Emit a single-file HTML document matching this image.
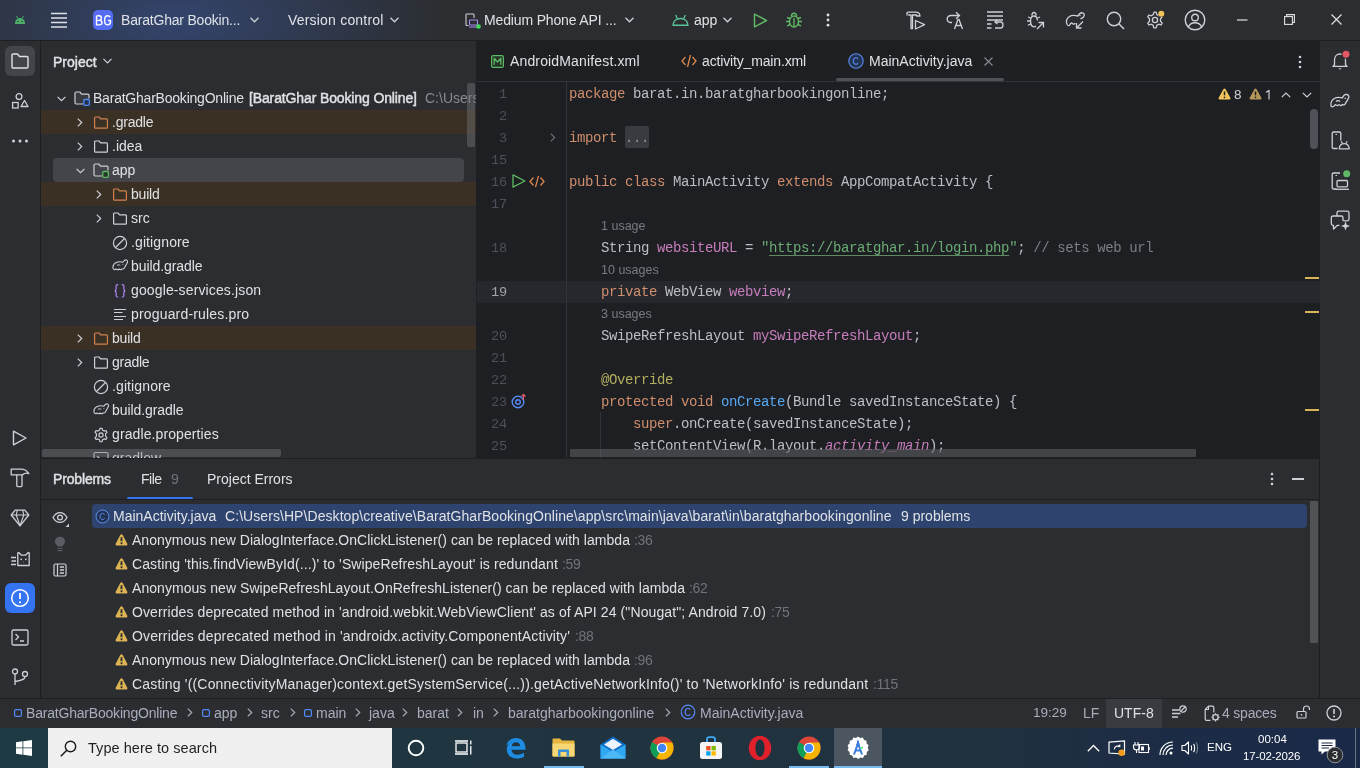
<!DOCTYPE html>
<html><head><meta charset="utf-8">
<style>
*{box-sizing:border-box;margin:0;padding:0}
body{will-change:transform}
html,body{width:1360px;height:768px;overflow:hidden;background:#1E1F22;font-family:"Liberation Sans",sans-serif;color:#DFE1E5}
.a{position:absolute}
.t{position:absolute;white-space:pre;font-size:14px;line-height:16px}
.ln{font-size:13.6px!important;letter-spacing:-0.2px!important}
.m{position:absolute;white-space:pre;font-family:"Liberation Mono",monospace;font-size:14px;letter-spacing:-0.4px;line-height:16px;color:#BCBEC4}
svg{position:absolute;overflow:visible}
#title{left:0;top:0;width:1360px;height:40px;background:#2B2D30}
#tline{left:0;top:40px;width:1360px;height:1px;background:#1E1F22}
#grad{left:0;top:0;width:1360px;height:40px;background:radial-gradient(ellipse 270px 110px at 175px 20px,rgba(58,88,160,0.55),rgba(58,88,160,0.25) 55%,rgba(58,88,160,0) 100%)}
#lstrip{left:0;top:41px;width:41px;height:657px;background:#2B2D30;border-right:1px solid #1E1F22}
#proj{left:41px;top:41px;width:435px;height:417px;background:#2B2D30}
#editor{left:476px;top:41px;width:844px;height:417px;background:#1E1F22}
#rstrip{left:1320px;top:41px;width:40px;height:657px;background:#2B2D30}
#probs{left:41px;top:459px;width:1278px;height:239px;background:#2B2D30}
#status{left:0;top:698px;width:1360px;height:30px;background:#2B2D30;border-top:1px solid #1E1F22}
#task{left:0;top:728px;width:1360px;height:40px;background:linear-gradient(90deg,#1E3A43 0%,#1F3641 25%,#20333F 55%,#20313F 72%,#1D2C45 85%,#1A2948 100%)}
</style></head><body>
<!-- TITLE BAR -->
<div id="title" class="a"></div>
<div id="grad" class="a"></div>
<div id="tline" class="a"></div>
<svg style="left:14px;top:15px" width="12" height="10" viewBox="0 0 12 10"><path d="M1 9 C1 5 3.5 3 6 3 C8.5 3 11 5 11 9 Z" fill="#4CAF6A"/><path d="M2.5 1 L4 3.5 M9.5 1 L8 3.5" stroke="#4CAF6A" stroke-width="1"/><circle cx="4" cy="6.5" r="0.7" fill="#2B2D30"/><circle cx="8" cy="6.5" r="0.7" fill="#2B2D30"/></svg>
<svg style="left:51px;top:12px" width="16" height="16" viewBox="0 0 16 16"><path d="M0 1.5H16M0 6H16M0 10.5H16M0 15H16" stroke="#DFE1E5" stroke-width="1.6"/></svg>
<div class="a" style="left:93px;top:10px;width:20px;height:20px;border-radius:5px;background:linear-gradient(135deg,#5A6CF2,#4F6CF5)"></div>
<svg style="left:95px;top:15px" width="17" height="11" viewBox="0 0 17 11"><path d="M1.5 0.8V9.9H4.6C6.1 9.9 7 9 7 7.6C7 6.2 6.1 5.3 4.6 5.3H1.5M1.5 5.3H4.2C5.6 5.3 6.4 4.5 6.4 3.1C6.4 1.7 5.6 0.8 4.2 0.8H1.5" stroke="#FFFFFF" stroke-width="1.35" fill="none" stroke-linejoin="round"/><path d="M15.2 2.3C14.7 1.3 13.9 0.7 12.7 0.7C10.8 0.7 9.6 2.3 9.6 5.3C9.6 8.3 10.8 9.9 12.7 9.9C14.4 9.9 15.5 8.8 15.5 6.8V5.5H12.9" stroke="#FFFFFF" stroke-width="1.35" fill="none" stroke-linejoin="round"/></svg>
<div class="t" style="left:121px;top:12px;color:#DFE1E5;letter-spacing:-0.2px">BaratGhar Bookin...</div>
<svg style="left:250px;top:17px" width="9" height="6" viewBox="0 0 9 6"><path d="M0.5 0.8L4.5 4.8L8.5 0.8" stroke="#CED0D6" stroke-width="1.3" fill="none"/></svg>
<div class="t" style="left:288px;top:12px;color:#DFE1E5;letter-spacing:0.2px">Version control</div>
<svg style="left:390px;top:17px" width="9" height="6" viewBox="0 0 9 6"><path d="M0.5 0.8L4.5 4.8L8.5 0.8" stroke="#CED0D6" stroke-width="1.3" fill="none"/></svg>
<svg style="left:465px;top:13px" width="16" height="16" viewBox="0 0 16 16"><path d="M3.5 12.5H1.8C1.3 12.5 1 12.2 1 11.7V1.8C1 1.3 1.3 1 1.8 1H8.2C8.7 1 9 1.3 9 1.8V5" stroke="#CED0D6" stroke-width="1.1" fill="none"/><rect x="4.5" y="7" width="8" height="5" rx="0.8" stroke="#A78BEB" stroke-width="1.1" fill="none"/><path d="M4 14H13" stroke="#A78BEB" stroke-width="1.1"/><circle cx="13.5" cy="13.5" r="2.3" fill="#3DDC5A"/></svg>
<div class="t" style="left:484px;top:12px;color:#DFE1E5;letter-spacing:-0.15px">Medium Phone API ...</div>
<svg style="left:625px;top:17px" width="9" height="6" viewBox="0 0 9 6"><path d="M0.5 0.8L4.5 4.8L8.5 0.8" stroke="#CED0D6" stroke-width="1.3" fill="none"/></svg>
<svg style="left:672px;top:14px" width="17" height="12" viewBox="0 0 17 12"><path d="M1 11.2C1.3 7 4.5 4.5 8.5 4.5C12.5 4.5 15.7 7 16 11.2Z" stroke="#5BC49A" stroke-width="1.4" fill="none" stroke-linejoin="round"/><path d="M3.5 1L5.3 4.4M13.5 1L11.7 4.4" stroke="#5BC49A" stroke-width="1.3"/></svg>
<div class="t" style="left:694px;top:12px;color:#DFE1E5">app</div>
<svg style="left:723px;top:17px" width="9" height="6" viewBox="0 0 9 6"><path d="M0.5 0.8L4.5 4.8L8.5 0.8" stroke="#CED0D6" stroke-width="1.3" fill="none"/></svg>
<svg style="left:753px;top:13px" width="15" height="15" viewBox="0 0 15 15"><path d="M1.5 1.2L13.5 7.5L1.5 13.8Z" stroke="#5FB865" stroke-width="1.5" fill="none" stroke-linejoin="round"/></svg>
<svg style="left:785px;top:12px" width="18" height="16" viewBox="0 0 18 16"><ellipse cx="9" cy="9.5" rx="4.5" ry="5.5" stroke="#5FB865" stroke-width="1.4" fill="none"/><path d="M6.3 4.2C6.5 2.2 7.5 1.2 9 1.2S11.5 2.2 11.7 4.2M4.5 9.5H1M17 9.5H13.5M5 6.5L2 5.5M13 6.5L16 5.5M5 12.5L2 13.8M13 12.5L16 13.8M9 6V15" stroke="#5FB865" stroke-width="1.4" fill="none"/></svg>
<svg style="left:826px;top:13px" width="4" height="14" viewBox="0 0 4 14"><circle cx="2" cy="2" r="1.4" fill="#DFE1E5"/><circle cx="2" cy="7" r="1.4" fill="#DFE1E5"/><circle cx="2" cy="12.2" r="1.4" fill="#DFE1E5"/></svg>
<!-- right title icons -->
<svg style="left:906px;top:11px" width="20" height="19" viewBox="0 0 20 19"><path d="M1 4.5V2.5C1 1.7 1.5 1.2 2.3 1.2H9.5C12 1.2 13.8 2.5 14 5H10.5V4H6.5V17.5H5V4H2.2" stroke="#CED0D6" stroke-width="1.3" fill="none" stroke-linejoin="round"/><path d="M9.5 9.5L18.5 13.7L9.5 18Z" stroke="#CED0D6" stroke-width="1.3" fill="none" stroke-linejoin="round"/></svg>
<svg style="left:946px;top:11px" width="19" height="19" viewBox="0 0 19 19"><path d="M13 4.5H5C2.8 4.5 1.2 6 1.2 8S2.8 11.5 5 11.5H6" stroke="#CED0D6" stroke-width="1.3" fill="none"/><path d="M10 1.2L13.5 4.5L10 7.8" stroke="#CED0D6" stroke-width="1.3" fill="none"/><path d="M8.5 18L12 8.5H13L16.5 18M9.8 14.5H15.2" stroke="#CED0D6" stroke-width="1.3" fill="none"/></svg>
<svg style="left:987px;top:11px" width="17" height="18" viewBox="0 0 17 18"><path d="M0 1H16M0 5H16M0 9H16M0 13H4.5M0 17H4.5" stroke="#CED0D6" stroke-width="1.3"/><path d="M9.5 11H13.5C15 11 16 12 16 14S15 17 13.5 17H8M10.5 9L8 11L10.5 13" stroke="#CED0D6" stroke-width="1.3" fill="none"/></svg>
<svg style="left:1026px;top:11px" width="19" height="19" viewBox="0 0 19 19"><path d="M11.5 9.5C11.2 6.5 9.8 5 8 5S4.5 6.8 4.5 10S5.8 15.8 8 15.8C8.8 15.8 9.5 15.5 10 15" stroke="#CED0D6" stroke-width="1.3" fill="none"/><path d="M5.8 4.5C6 2.5 6.8 1.5 8 1.5S10 2.5 10.2 4.5M4.5 10H1M4.8 7L2 6M4.8 13L2 14.2M11.5 7L14 6" stroke="#CED0D6" stroke-width="1.3" fill="none"/><path d="M11 18L17.5 11.5M12.5 11.5H17.5V16.5" stroke="#CED0D6" stroke-width="1.3" fill="none"/></svg>
<svg style="left:1065px;top:11px" width="21" height="19" viewBox="0 0 21 19"><path d="M2 13.5C1 11 1.5 7.5 4.5 5.5C7 3.8 11 4.5 13 5C14 3 15.5 1.5 17.5 1.8C19.5 2.2 19.8 4.5 18.5 6C17.5 7 16 7.5 15.5 8" stroke="#CED0D6" stroke-width="1.3" fill="none"/><path d="M2 13.5C3 15 4.5 15 5 13.5C5.5 12 6.5 11.5 7.5 12.5C8.5 13.5 9.5 13.5 10 12" stroke="#CED0D6" stroke-width="1.3" fill="none"/><path d="M18 10.5L11.5 17M11.5 12V17H16.5" stroke="#CED0D6" stroke-width="1.3" fill="none"/><circle cx="15" cy="4.5" r="0.7" fill="#CED0D6"/></svg>
<svg style="left:1106px;top:11px" width="19" height="19" viewBox="0 0 19 19"><circle cx="8" cy="8" r="6.7" stroke="#CED0D6" stroke-width="1.4" fill="none"/><path d="M12.8 12.8L18 18" stroke="#CED0D6" stroke-width="1.5"/></svg>
<svg style="left:1145px;top:10px" width="21" height="20" viewBox="0 0 21 20"><path d="M9 2.2H11.2L11.8 4.6L13.8 5.8L16.1 5L17.2 6.9L15.5 8.7V11.3L17.2 13.1L16.1 15L13.8 14.2L11.8 15.4L11.2 17.8H8.8L8.2 15.4L6.2 14.2L3.9 15L2.8 13.1L4.5 11.3V8.7L2.8 6.9L3.9 5L6.2 5.8L8.2 4.6Z" stroke="#CED0D6" stroke-width="1.3" fill="none" stroke-linejoin="round"/><circle cx="10" cy="10" r="2.6" stroke="#CED0D6" stroke-width="1.3" fill="none"/><circle cx="16.5" cy="3.5" r="3.6" fill="#2B2D30"/><circle cx="16.3" cy="3.7" r="3" fill="#F2C55C"/></svg>
<svg style="left:1184px;top:9px" width="22" height="22" viewBox="0 0 22 22"><circle cx="11" cy="11" r="9.8" stroke="#CED0D6" stroke-width="1.4" fill="none"/><circle cx="11" cy="8.5" r="3.3" stroke="#CED0D6" stroke-width="1.4" fill="none"/><path d="M4.5 18C5.5 15 8 13.8 11 13.8S16.5 15 17.5 18" stroke="#CED0D6" stroke-width="1.4" fill="none"/></svg>
<svg style="left:1237px;top:19px" width="11" height="2" viewBox="0 0 11 2"><path d="M0 1H10.5" stroke="#DFE1E5" stroke-width="1.2"/></svg>
<svg style="left:1284px;top:14px" width="11" height="11" viewBox="0 0 11 11"><rect x="0.6" y="2.6" width="7.8" height="7.8" stroke="#DFE1E5" stroke-width="1.1" fill="none"/><path d="M2.6 2.6V0.6H10.4V8.4H8.4" stroke="#DFE1E5" stroke-width="1.1" fill="none"/></svg>
<svg style="left:1331px;top:14px" width="11" height="11" viewBox="0 0 11 11"><path d="M0.5 0.5L10.5 10.5M10.5 0.5L0.5 10.5" stroke="#DFE1E5" stroke-width="1.2"/></svg>
<!-- LEFT STRIP -->
<div id="lstrip" class="a"></div>
<div class="a" style="left:5px;top:46px;width:30px;height:30px;border-radius:6px;background:#43454A"></div>
<svg style="left:11px;top:53px" width="18" height="16" viewBox="0 0 18 16"><path d="M1 2.2C1 1.5 1.5 1 2.2 1H6.5L8.5 3.5H15.8C16.5 3.5 17 4 17 4.7V13.8C17 14.5 16.5 15 15.8 15H2.2C1.5 15 1 14.5 1 13.8Z" stroke="#DFE1E5" stroke-width="1.4" fill="none" stroke-linejoin="round"/></svg>
<svg style="left:11px;top:92px" width="18" height="18" viewBox="0 0 18 18"><circle cx="8" cy="4.6" r="2.9" stroke="#CED0D6" stroke-width="1.3" fill="none"/><rect x="1.6" y="10.5" width="5.5" height="5.5" stroke="#CED0D6" stroke-width="1.3" fill="none"/><path d="M13.5 8.5L17 14.5H10Z" stroke="#CED0D6" stroke-width="1.3" fill="none" stroke-linejoin="round"/></svg>
<svg style="left:11px;top:139px" width="18" height="4" viewBox="0 0 18 4"><circle cx="2.5" cy="2" r="1.5" fill="#CED0D6"/><circle cx="9" cy="2" r="1.5" fill="#CED0D6"/><circle cx="15.5" cy="2" r="1.5" fill="#CED0D6"/></svg>
<svg style="left:12px;top:430px" width="16" height="16" viewBox="0 0 16 16"><path d="M1.5 1.2L14 8L1.5 14.8Z" stroke="#CED0D6" stroke-width="1.4" fill="none" stroke-linejoin="round"/></svg>
<svg style="left:10px;top:468px" width="20" height="20" viewBox="0 0 20 20"><path d="M1.2 1.2H11C14.2 1.2 17 2.6 18.8 5.6C16.5 4.9 14.2 5.2 12.6 6.8H1.2Z" stroke="#CED0D6" stroke-width="1.3" fill="none" stroke-linejoin="round"/><path d="M6.8 6.8V17.4C6.8 18.2 7.2 18.6 8 18.6H10.8C11.6 18.6 12 18.2 12 17.4V6.8" stroke="#CED0D6" stroke-width="1.3" fill="none"/></svg>
<svg style="left:10px;top:509px" width="20" height="18" viewBox="0 0 20 18"><path d="M5.2 1.2H14.8L18.8 6L10 16.8L1.2 6Z" stroke="#CED0D6" stroke-width="1.3" fill="none" stroke-linejoin="round"/><path d="M1.2 6H18.8M7.3 1.2L6.2 6L10 16.8L13.8 6L12.7 1.2" stroke="#CED0D6" stroke-width="1.1" fill="none" stroke-linejoin="round"/></svg>
<svg style="left:10px;top:551px" width="20" height="16" viewBox="0 0 20 16"><path d="M7.8 14.5V2.3C7.8 1.5 8.4 1.2 9 1.7L11.5 4.2H15.5L18 1.7C18.6 1.2 19.2 1.5 19.2 2.3V14.5Z" stroke="#CED0D6" stroke-width="1.3" fill="none" stroke-linejoin="round"/><path d="M1 6.5H6M1.5 10H6M1 13.5H6" stroke="#CED0D6" stroke-width="1.3"/><circle cx="11.2" cy="8.3" r="0.9" fill="#CED0D6"/><circle cx="15.8" cy="8.3" r="0.9" fill="#CED0D6"/><path d="M12.8 10.8H14.2L13.5 11.6Z" fill="#CED0D6"/></svg>
<div class="a" style="left:5px;top:583px;width:30px;height:30px;border-radius:6px;background:#3574F0"></div>
<svg style="left:10px;top:588px" width="20" height="20" viewBox="0 0 20 20"><circle cx="10" cy="10" r="8.3" stroke="#FFFFFF" stroke-width="1.5" fill="none"/><path d="M10 5V11" stroke="#FFFFFF" stroke-width="1.8"/><circle cx="10" cy="14.3" r="1.1" fill="#FFFFFF"/></svg>
<svg style="left:11px;top:629px" width="18" height="17" viewBox="0 0 18 17"><rect x="1" y="1" width="16" height="15" rx="1.5" stroke="#CED0D6" stroke-width="1.3" fill="none"/><path d="M4.5 5L7.5 8L4.5 11M9 12H13" stroke="#CED0D6" stroke-width="1.3" fill="none"/></svg>
<svg style="left:11px;top:668px" width="18" height="18" viewBox="0 0 18 18"><circle cx="4" cy="3.5" r="2.5" stroke="#CED0D6" stroke-width="1.3" fill="none"/><circle cx="14" cy="6" r="2.5" stroke="#CED0D6" stroke-width="1.3" fill="none"/><path d="M4 6V17M14 8.5C14 11.5 11 12.5 4 13.5" stroke="#CED0D6" stroke-width="1.3" fill="none"/></svg>
<!-- PROJECT PANEL -->
<div id="proj" class="a"></div>
<div class="t" style="left:53px;top:54px;-webkit-text-stroke:0.45px #DFE1E5;color:#DFE1E5">Project</div>
<svg style="left:103px;top:58px" width="9" height="6" viewBox="0 0 9 6"><path d="M0.5 0.8L4.5 4.8L8.5 0.8" stroke="#CED0D6" stroke-width="1.2" fill="none"/></svg>
<div class="a" style="left:41px;top:110px;width:435px;height:24px;background:#3A3024"></div>
<div class="a" style="left:53px;top:158px;width:411px;height:24px;border-radius:4px;background:#43454A"></div>
<div class="a" style="left:41px;top:182px;width:435px;height:24px;background:#3A3024"></div>
<div class="a" style="left:41px;top:326px;width:435px;height:24px;background:#3A3024"></div>
<svg style="left:57px;top:96px" width="9" height="6" viewBox="0 0 9 6"><path d="M0.6 0.8L4.5 4.7L8.4 0.8" stroke="#CED0D6" stroke-width="1.2" fill="none"/></svg>
<svg style="left:74px;top:91px" width="16" height="16" viewBox="0 0 16 16"><path d="M9 13H2.2C1.5 13 1 12.5 1 11.8V2.2C1 1.5 1.5 1 2.2 1H5.8L7.6 3.2H13.8C14.5 3.2 15 3.7 15 4.4V7.5" stroke="#CED0D6" stroke-width="1.2" fill="#393B40" stroke-linejoin="round"/><rect x="9.8" y="8.5" width="5.6" height="5.8" rx="1.2" stroke="#548AF7" stroke-width="1.3" fill="#25324D"/></svg>
<div class="t" style="left:93px;top:90px;letter-spacing:-0.22px">BaratGharBookingOnline</div>
<svg style="left:76.5px;top:118px" width="6" height="9" viewBox="0 0 6 9"><path d="M0.8 0.6L4.7 4.5L0.8 8.4" stroke="#CED0D6" stroke-width="1.2" fill="none"/></svg>
<svg style="left:93px;top:115px" width="16" height="16" viewBox="0 0 16 16"><path d="M1.6 2.9C1.6 2.4 2 2 2.5 2H6L7.6 3.8H13.5C14 3.8 14.4 4.2 14.4 4.7V12.2C14.4 12.7 14 13.1 13.5 13.1H2.5C2 13.1 1.6 12.7 1.6 12.2Z" stroke="#CF8250" stroke-width="1.2" fill="none" stroke-linejoin="round"/></svg>
<div class="t" style="left:112px;top:114px;letter-spacing:-0.22px">.gradle</div>
<svg style="left:76.5px;top:142px" width="6" height="9" viewBox="0 0 6 9"><path d="M0.8 0.6L4.7 4.5L0.8 8.4" stroke="#CED0D6" stroke-width="1.2" fill="none"/></svg>
<svg style="left:93px;top:139px" width="16" height="16" viewBox="0 0 16 16"><path d="M1.6 2.9C1.6 2.4 2 2 2.5 2H6L7.6 3.8H13.5C14 3.8 14.4 4.2 14.4 4.7V12.2C14.4 12.7 14 13.1 13.5 13.1H2.5C2 13.1 1.6 12.7 1.6 12.2Z" stroke="#CED0D6" stroke-width="1.2" fill="none" stroke-linejoin="round"/></svg>
<div class="t" style="left:112px;top:138px;letter-spacing:0px">.idea</div>
<svg style="left:76px;top:168px" width="9" height="6" viewBox="0 0 9 6"><path d="M0.6 0.8L4.5 4.7L8.4 0.8" stroke="#CED0D6" stroke-width="1.2" fill="none"/></svg>
<svg style="left:93px;top:163px" width="16" height="16" viewBox="0 0 16 16"><path d="M9 13H2.2C1.5 13 1 12.5 1 11.8V2.2C1 1.5 1.5 1 2.2 1H5.8L7.6 3.2H13.8C14.5 3.2 15 3.7 15 4.4V7.5" stroke="#CED0D6" stroke-width="1.2" fill="none" stroke-linejoin="round"/><rect x="9.8" y="8.5" width="5.6" height="5.8" rx="1.2" stroke="#5FB865" stroke-width="1.3" fill="#253627"/></svg>
<div class="t" style="left:112px;top:162px;letter-spacing:0px">app</div>
<svg style="left:95.5px;top:190px" width="6" height="9" viewBox="0 0 6 9"><path d="M0.8 0.6L4.7 4.5L0.8 8.4" stroke="#CED0D6" stroke-width="1.2" fill="none"/></svg>
<svg style="left:112px;top:187px" width="16" height="16" viewBox="0 0 16 16"><path d="M1.6 2.9C1.6 2.4 2 2 2.5 2H6L7.6 3.8H13.5C14 3.8 14.4 4.2 14.4 4.7V12.2C14.4 12.7 14 13.1 13.5 13.1H2.5C2 13.1 1.6 12.7 1.6 12.2Z" stroke="#CF8250" stroke-width="1.2" fill="none" stroke-linejoin="round"/></svg>
<div class="t" style="left:131px;top:186px;letter-spacing:-0.2px">build</div>
<svg style="left:95.5px;top:214px" width="6" height="9" viewBox="0 0 6 9"><path d="M0.8 0.6L4.7 4.5L0.8 8.4" stroke="#CED0D6" stroke-width="1.2" fill="none"/></svg>
<svg style="left:112px;top:211px" width="16" height="16" viewBox="0 0 16 16"><path d="M1.6 2.9C1.6 2.4 2 2 2.5 2H6L7.6 3.8H13.5C14 3.8 14.4 4.2 14.4 4.7V12.2C14.4 12.7 14 13.1 13.5 13.1H2.5C2 13.1 1.6 12.7 1.6 12.2Z" stroke="#CED0D6" stroke-width="1.2" fill="none" stroke-linejoin="round"/></svg>
<div class="t" style="left:131px;top:210px;letter-spacing:0px">src</div>
<svg style="left:112px;top:235px" width="16" height="16" viewBox="0 0 16 16"><circle cx="8" cy="8" r="6.6" stroke="#CED0D6" stroke-width="1.2" fill="none"/><path d="M3.5 12.5L12.5 3.5" stroke="#CED0D6" stroke-width="1.2"/></svg>
<div class="t" style="left:131px;top:234px;letter-spacing:0.11px">.gitignore</div>
<svg style="left:112px;top:259px" width="16" height="16" viewBox="0 0 16 16"><path d="M1.2 9.8C0.6 7.8 1.6 5 4.2 3.6C6.3 2.5 9 2.7 10.8 3.2C11.8 1.6 13.2 0.6 14.5 1C15.8 1.4 15.8 3 15 4.3L12.6 8.6C12.2 9.6 11.3 10.3 10.2 9.9C9.4 10.9 8.2 10.9 7.3 10C6.4 10.9 5.2 10.9 4.4 10C3.5 10.9 1.9 10.9 1.2 9.8Z" stroke="#CED0D6" stroke-width="1.1" fill="none" stroke-linejoin="round"/><path d="M5 6.5C6 5.5 7.5 5.6 8.3 6.6M10.5 5.6L11.3 5.3" stroke="#CED0D6" stroke-width="1" fill="none"/></svg>
<div class="t" style="left:131px;top:258px;letter-spacing:-0.08px">build.gradle</div>
<svg style="left:112px;top:283px" width="16" height="16" viewBox="0 0 16 16"><path d="M6.3 1.6H5.6C4.6 1.6 4.1 2.1 4.1 3.1V6.2C4.1 7.1 3.7 7.6 2.6 7.8C3.7 8 4.1 8.5 4.1 9.4V12.5C4.1 13.5 4.6 14 5.6 14H6.3M9.7 1.6H10.4C11.4 1.6 11.9 2.1 11.9 3.1V6.2C11.9 7.1 12.3 7.6 13.4 7.8C12.3 8 11.9 8.5 11.9 9.4V12.5C11.9 13.5 11.4 14 10.4 14H9.7" stroke="#B189F5" stroke-width="1.2" fill="none"/></svg>
<div class="t" style="left:131px;top:282px;letter-spacing:0.13px">google-services.json</div>
<svg style="left:112px;top:307px" width="16" height="16" viewBox="0 0 16 16"><path d="M2 2.5H14M2 5.5H10.5M2 9.5H14M2 12.5H11" stroke="#CED0D6" stroke-width="1"/></svg>
<div class="t" style="left:131px;top:306px;letter-spacing:0.17px">proguard-rules.pro</div>
<svg style="left:76.5px;top:334px" width="6" height="9" viewBox="0 0 6 9"><path d="M0.8 0.6L4.7 4.5L0.8 8.4" stroke="#CED0D6" stroke-width="1.2" fill="none"/></svg>
<svg style="left:93px;top:331px" width="16" height="16" viewBox="0 0 16 16"><path d="M1.6 2.9C1.6 2.4 2 2 2.5 2H6L7.6 3.8H13.5C14 3.8 14.4 4.2 14.4 4.7V12.2C14.4 12.7 14 13.1 13.5 13.1H2.5C2 13.1 1.6 12.7 1.6 12.2Z" stroke="#CF8250" stroke-width="1.2" fill="none" stroke-linejoin="round"/></svg>
<div class="t" style="left:112px;top:330px;letter-spacing:-0.2px">build</div>
<svg style="left:76.5px;top:358px" width="6" height="9" viewBox="0 0 6 9"><path d="M0.8 0.6L4.7 4.5L0.8 8.4" stroke="#CED0D6" stroke-width="1.2" fill="none"/></svg>
<svg style="left:93px;top:355px" width="16" height="16" viewBox="0 0 16 16"><path d="M1.6 2.9C1.6 2.4 2 2 2.5 2H6L7.6 3.8H13.5C14 3.8 14.4 4.2 14.4 4.7V12.2C14.4 12.7 14 13.1 13.5 13.1H2.5C2 13.1 1.6 12.7 1.6 12.2Z" stroke="#CED0D6" stroke-width="1.2" fill="none" stroke-linejoin="round"/></svg>
<div class="t" style="left:112px;top:354px;letter-spacing:-0.26px">gradle</div>
<svg style="left:93px;top:379px" width="16" height="16" viewBox="0 0 16 16"><circle cx="8" cy="8" r="6.6" stroke="#CED0D6" stroke-width="1.2" fill="none"/><path d="M3.5 12.5L12.5 3.5" stroke="#CED0D6" stroke-width="1.2"/></svg>
<div class="t" style="left:112px;top:378px;letter-spacing:0.11px">.gitignore</div>
<svg style="left:93px;top:403px" width="16" height="16" viewBox="0 0 16 16"><path d="M1.2 9.8C0.6 7.8 1.6 5 4.2 3.6C6.3 2.5 9 2.7 10.8 3.2C11.8 1.6 13.2 0.6 14.5 1C15.8 1.4 15.8 3 15 4.3L12.6 8.6C12.2 9.6 11.3 10.3 10.2 9.9C9.4 10.9 8.2 10.9 7.3 10C6.4 10.9 5.2 10.9 4.4 10C3.5 10.9 1.9 10.9 1.2 9.8Z" stroke="#CED0D6" stroke-width="1.1" fill="none" stroke-linejoin="round"/><path d="M5 6.5C6 5.5 7.5 5.6 8.3 6.6M10.5 5.6L11.3 5.3" stroke="#CED0D6" stroke-width="1" fill="none"/></svg>
<div class="t" style="left:112px;top:402px;letter-spacing:-0.08px">build.gradle</div>
<svg style="left:93px;top:427px" width="16" height="16" viewBox="0 0 16 16"><path d="M6.9 1.3H9.1L9.5 3.2L11.1 4.1L12.9 3.5L14 5.4L12.6 6.7V9.3L14 10.6L12.9 12.5L11.1 11.9L9.5 12.8L9.1 14.7H6.9L6.5 12.8L4.9 11.9L3.1 12.5L2 10.6L3.4 9.3V6.7L2 5.4L3.1 3.5L4.9 4.1L6.5 3.2Z" stroke="#CED0D6" stroke-width="1.15" fill="none" stroke-linejoin="round"/><circle cx="8" cy="8" r="2.1" stroke="#CED0D6" stroke-width="1.15" fill="none"/></svg>
<div class="t" style="left:112px;top:426px;letter-spacing:0.1px">gradle.properties</div>
<svg style="left:93px;top:451px" width="16" height="16" viewBox="0 0 16 16"><rect x="1" y="1.5" width="14" height="13" rx="1.5" stroke="#CED0D6" stroke-width="1.2" fill="none"/><path d="M4 5L6.5 7.5L4 10" stroke="#CED0D6" stroke-width="1.2" fill="none"/></svg>
<div class="t" style="left:112px;top:450px;letter-spacing:0px">gradlew</div>
<div class="t" style="left:249px;top:90px;-webkit-text-stroke:0.45px #DFE1E5;letter-spacing:-0.13px">[BaratGhar Booking Online]</div>
<div class="t" style="left:425px;top:90px;color:#868A91">C:\Users\HP\Desktop</div>
<div class="a" style="left:467px;top:83px;width:8px;height:64px;border-radius:2px;background:rgba(120,122,128,0.42)"></div>
<div class="a" style="left:42px;top:449px;width:239px;height:8px;border-radius:2px;background:rgba(120,122,128,0.42)"></div><!-- EDITOR -->
<div id="editor" class="a"></div>
<div class="a" style="left:477px;top:81px;width:843px;height:1px;background:#313438"></div>
<svg style="left:491px;top:55px" width="13" height="13" viewBox="0 0 13 13"><rect x="0.6" y="0.6" width="11.8" height="11.8" rx="1.5" stroke="#5FB865" stroke-width="1.2" fill="#233526"/><path d="M3.2 9.8V3.2L6.5 7L9.8 3.2V9.8" stroke="#5FB865" stroke-width="1.3" fill="none" stroke-linejoin="round"/></svg>
<div class="t" style="left:510px;top:53px;letter-spacing:0.15px">AndroidManifest.xml</div>
<svg style="left:681px;top:54px" width="16" height="14" viewBox="0 0 16 14"><path d="M4.5 3L1 7L4.5 11M11.5 3L15 7L11.5 11M9.5 1L6.5 13" stroke="#D9874F" stroke-width="1.3" fill="none"/></svg>
<div class="t" style="left:702px;top:53px;letter-spacing:-0.15px">activity_main.xml</div>
<svg style="left:848px;top:53px" width="16" height="16" viewBox="0 0 16 16"><circle cx="8" cy="8" r="7.2" stroke="#5A8DF0" stroke-width="1.1" fill="#233354"/><path d="M10.1 5.9C9.6 5.2 8.9 4.8 8.1 4.8C6.4 4.8 5.3 6.2 5.3 8S6.4 11.2 8.1 11.2C8.9 11.2 9.6 10.8 10.1 10.1" stroke="#5A8DF0" stroke-width="1.1" fill="none"/></svg>
<div class="t" style="left:869px;top:53px">MainActivity.java</div>
<svg style="left:984px;top:57px" width="9" height="9" viewBox="0 0 9 9"><path d="M0.5 0.5L8.5 8.5M8.5 0.5L0.5 8.5" stroke="#868A91" stroke-width="1.1"/></svg>
<div class="a" style="left:836px;top:78px;width:168px;height:3px;border-radius:2px;background:#4E5157"></div>
<svg style="left:1298px;top:55px" width="4" height="14" viewBox="0 0 4 14"><circle cx="2" cy="2" r="1.3" fill="#CED0D6"/><circle cx="2" cy="7" r="1.3" fill="#CED0D6"/><circle cx="2" cy="12" r="1.3" fill="#CED0D6"/></svg>
<div class="a" style="left:477px;top:281px;width:843px;height:22px;background:#26282E"></div>
<div class="a" style="left:566px;top:82px;width:1px;height:376px;background:#313438"></div>
<div class="a" style="left:600px;top:412px;width:1px;height:46px;background:#313438"></div>
<div class="m ln" style="left:466px;top:83.5px;width:41px;text-align:right;line-height:22px;color:#4B5059">1</div>
<div class="m" style="left:569px;top:83px;line-height:22px"><span style="color:#CF8E6D;">package </span><span style="color:#BCBEC4;">barat.in.baratgharbookingonline;</span></div>
<div class="m ln" style="left:466px;top:105.5px;width:41px;text-align:right;line-height:22px;color:#4B5059">2</div>
<div class="m ln" style="left:466px;top:127.5px;width:41px;text-align:right;line-height:22px;color:#4B5059">3</div>
<div class="m" style="left:569px;top:127px;line-height:22px"><span style="color:#CF8E6D;">import </span></div>
<div class="m ln" style="left:466px;top:149.5px;width:41px;text-align:right;line-height:22px;color:#4B5059">15</div>
<div class="m ln" style="left:466px;top:171.5px;width:41px;text-align:right;line-height:22px;color:#4B5059">16</div>
<div class="m" style="left:569px;top:171px;line-height:22px"><span style="color:#CF8E6D;">public class </span><span style="color:#BCBEC4;">MainActivity </span><span style="color:#CF8E6D;">extends </span><span style="color:#BCBEC4;">AppCompatActivity {</span></div>
<div class="m ln" style="left:466px;top:193.5px;width:41px;text-align:right;line-height:22px;color:#4B5059">17</div>
<div class="t" style="left:601px;top:215px;line-height:22px;font-size:12.5px;color:#787B82">1 usage</div>
<div class="m ln" style="left:466px;top:237.5px;width:41px;text-align:right;line-height:22px;color:#4B5059">18</div>
<div class="m" style="left:569px;top:237px;line-height:22px"><span style="color:#BCBEC4;">    String </span><span style="color:#C77DBB;">websiteURL</span><span style="color:#BCBEC4;"> = </span><span style="color:#6AAB73;">"</span><span style="color:#6AAB73;text-decoration:underline;text-underline-offset:3px;text-decoration-thickness:1px;text-decoration-color:#5F8A63">https</span><span style="color:#6AAB73;text-decoration:underline;text-underline-offset:3px;text-decoration-thickness:1px;text-decoration-color:#5F8A63">:/</span><span style="color:#6AAB73;text-decoration:underline;text-underline-offset:3px;text-decoration-thickness:1px;text-decoration-color:#5F8A63">/baratghar.in/login.php</span><span style="color:#6AAB73;">"</span><span style="color:#BCBEC4;">; </span><span style="color:#7A7E85;">// sets web url</span></div>
<div class="t" style="left:601px;top:259px;line-height:22px;font-size:12.5px;color:#787B82">10 usages</div>
<div class="m ln" style="left:466px;top:281.5px;width:41px;text-align:right;line-height:22px;color:#A1A3AB">19</div>
<div class="m" style="left:569px;top:281px;line-height:22px"><span style="color:#CF8E6D;">    private </span><span style="color:#BCBEC4;">WebView </span><span style="color:#C77DBB;">webview</span><span style="color:#BCBEC4;">;</span></div>
<div class="t" style="left:601px;top:303px;line-height:22px;font-size:12.5px;color:#787B82">3 usages</div>
<div class="m ln" style="left:466px;top:325.5px;width:41px;text-align:right;line-height:22px;color:#4B5059">20</div>
<div class="m" style="left:569px;top:325px;line-height:22px"><span style="color:#BCBEC4;">    SwipeRefreshLayout </span><span style="color:#C77DBB;">mySwipeRefreshLayout</span><span style="color:#BCBEC4;">;</span></div>
<div class="m ln" style="left:466px;top:347.5px;width:41px;text-align:right;line-height:22px;color:#4B5059">21</div>
<div class="m ln" style="left:466px;top:369.5px;width:41px;text-align:right;line-height:22px;color:#4B5059">22</div>
<div class="m" style="left:569px;top:369px;line-height:22px"><span style="color:#B3AE60;">    @Override</span></div>
<div class="m ln" style="left:466px;top:391.5px;width:41px;text-align:right;line-height:22px;color:#4B5059">23</div>
<div class="m" style="left:569px;top:391px;line-height:22px"><span style="color:#CF8E6D;">    protected void </span><span style="color:#56A8F5;">onCreate</span><span style="color:#BCBEC4;">(Bundle savedInstanceState) {</span></div>
<div class="m ln" style="left:466px;top:413.5px;width:41px;text-align:right;line-height:22px;color:#4B5059">24</div>
<div class="m" style="left:569px;top:413px;line-height:22px"><span style="color:#CF8E6D;">        super</span><span style="color:#BCBEC4;">.onCreate(savedInstanceState);</span></div>
<div class="m ln" style="left:466px;top:435.5px;width:41px;text-align:right;line-height:22px;color:#4B5059">25</div>
<div class="m" style="left:569px;top:435px;line-height:22px"><span style="color:#BCBEC4;">        setContentView(R.layout.</span><span style="color:#C77DBB;font-style:italic">activity_main</span><span style="color:#BCBEC4;">);</span></div>
<div class="a" style="left:625px;top:126px;width:24px;height:22px;background:#393B40;border-radius:2px"></div>
<div class="m" style="left:625px;top:127px;line-height:22px;color:#8C8E94">...</div>
<svg style="left:550px;top:133px" width="6" height="9" viewBox="0 0 6 9"><path d="M0.8 0.6L4.7 4.5L0.8 8.4" stroke="#6F737A" stroke-width="1.1" fill="none"/></svg>
<svg style="left:512px;top:174px" width="14" height="14" viewBox="0 0 14 14"><path d="M1 0.8L12.8 7L1 13.2Z" stroke="#5FB865" stroke-width="1.3" fill="none" stroke-linejoin="round"/></svg>
<svg style="left:529px;top:175px" width="16" height="13" viewBox="0 0 16 13"><path d="M4.5 2.5L1 6.5L4.5 10.5M11.5 2.5L15 6.5L11.5 10.5M9.5 0.8L6.5 12.2" stroke="#D9874F" stroke-width="1.3" fill="none"/></svg>
<svg style="left:511px;top:393px" width="16" height="16" viewBox="0 0 16 16"><circle cx="7" cy="9" r="5.8" stroke="#548AF7" stroke-width="1.4" fill="none"/><circle cx="7" cy="9" r="2.3" stroke="#548AF7" stroke-width="1.4" fill="none"/><path d="M12.5 7V1.5M10.5 3.5L12.5 1.3L14.5 3.5" stroke="#E55765" stroke-width="1.2" fill="none"/></svg>
<svg style="left:1218px;top:88px" width="13" height="12" viewBox="0 0 13 12"><path d="M6.5 0.5C7 0.5 7.3 0.8 7.6 1.2L12.3 9.8C12.8 10.7 12.3 11.5 11.3 11.5H1.7C0.7 11.5 0.2 10.7 0.7 9.8L5.4 1.2C5.7 0.8 6 0.5 6.5 0.5Z" fill="#F2C55C"/><path d="M6.5 3.5V7.3" stroke="#1E1F22" stroke-width="1.5"/><circle cx="6.5" cy="9.3" r="0.85" fill="#1E1F22"/></svg>
<div class="t" style="left:1234px;top:87px;font-size:13.5px;color:#CED0D6">8</div>
<svg style="left:1249px;top:88px" width="13" height="12" viewBox="0 0 13 12"><path d="M6.5 0.5C7 0.5 7.3 0.8 7.6 1.2L12.3 9.8C12.8 10.7 12.3 11.5 11.3 11.5H1.7C0.7 11.5 0.2 10.7 0.7 9.8L5.4 1.2C5.7 0.8 6 0.5 6.5 0.5Z" fill="#B5975A"/><path d="M6.5 3.5V7.3" stroke="#1E1F22" stroke-width="1.5"/><circle cx="6.5" cy="9.3" r="0.85" fill="#1E1F22"/></svg>
<svg style="left:1265px;top:90px" width="6" height="10" viewBox="0 0 6 10"><path d="M1 2.2L4 0.6V9.5" stroke="#CED0D6" stroke-width="1.2" fill="none"/></svg>
<svg style="left:1281px;top:92px" width="10" height="6" viewBox="0 0 10 6"><path d="M0.8 5.2L5 1L9.2 5.2" stroke="#CED0D6" stroke-width="1.2" fill="none"/></svg>
<svg style="left:1302px;top:92px" width="10" height="6" viewBox="0 0 10 6"><path d="M0.8 0.8L5 5L9.2 0.8" stroke="#CED0D6" stroke-width="1.2" fill="none"/></svg>
<div class="a" style="left:1310px;top:109px;width:8px;height:40px;border-radius:4px;background:#4E5157"></div>
<div class="a" style="left:1305px;top:277px;width:14px;height:2px;background:#D9B55A"></div>
<div class="a" style="left:1305px;top:311px;width:14px;height:2px;background:#D9B55A"></div>
<div class="a" style="left:1305px;top:409px;width:14px;height:2px;background:#D9B55A"></div>
<div class="a" style="left:570px;top:449px;width:626px;height:8px;border-radius:1px;background:rgba(92,94,99,0.6)"></div><!-- RIGHT STRIP -->
<div id="rstrip" class="a"></div>
<svg style="left:1330px;top:50px" width="21" height="21" viewBox="0 0 21 21"><path d="M4.5 14.8V9.8C4.5 6.5 6.8 4 10 4S15.5 6.5 15.5 9.8V14.8L17 16.3H3Z" stroke="#CED0D6" stroke-width="1.3" fill="none" stroke-linejoin="round"/><path d="M8.5 18.3H11.5L10 19.8Z" fill="#CED0D6"/><circle cx="16" cy="4.3" r="4.4" fill="#2B2D30"/><circle cx="16" cy="4.3" r="3.5" fill="#E55765"/></svg>
<svg style="left:1329px;top:92px" width="22" height="18" viewBox="0 0 22 18"><path d="M2.2 14.5C1.2 11.8 2.2 8.2 5.2 6.5C7.8 5 11.2 5.3 13.3 5.9C14.3 3.6 16 2.2 17.9 2.5C20 2.9 20.4 5 19.2 6.8L16.6 11.2C16.1 12.6 14.8 13.2 13.6 12.5C12.6 13.8 11 13.8 10 12.6C9 13.8 7.4 13.8 6.4 12.6C5.4 14 3.4 15.5 2.2 14.5Z" stroke="#CED0D6" stroke-width="1.3" fill="none" stroke-linejoin="round"/><path d="M7 9.5C8.2 8.3 10 8.4 11 9.6" stroke="#CED0D6" stroke-width="1.1" fill="none"/><circle cx="16.3" cy="6.2" r="0.8" fill="#CED0D6"/></svg>
<svg style="left:1331px;top:131px" width="19" height="20" viewBox="0 0 19 20"><path d="M6.5 17.5H2.5C1.7 17.5 1.2 17 1.2 16.2V2.3C1.2 1.5 1.7 1 2.5 1H8.5C9.3 1 9.8 1.5 9.8 2.3V9.5" stroke="#CED0D6" stroke-width="1.3" fill="none"/><path d="M4.5 3.5H6" stroke="#CED0D6" stroke-width="1.2"/><path d="M8.2 17.8C8.5 14.5 10.6 12.6 13.2 12.6S17.9 14.5 18.2 17.8Z" stroke="#CED0D6" stroke-width="1.3" fill="none" stroke-linejoin="round"/><path d="M10.3 10.3L11.2 12.2M16.1 10.3L15.2 12.2" stroke="#CED0D6" stroke-width="1.2"/></svg>
<svg style="left:1331px;top:170px" width="20" height="21" viewBox="0 0 20 21"><path d="M5.5 19H2.5C1.7 19 1.2 18.5 1.2 17.7V4.3C1.2 3.5 1.7 3 2.5 3H9" stroke="#CED0D6" stroke-width="1.3" fill="none"/><path d="M4.5 5.5H6" stroke="#CED0D6" stroke-width="1.2"/><rect x="6" y="10.5" width="10.5" height="6.3" rx="1" stroke="#CED0D6" stroke-width="1.3" fill="none"/><path d="M4.5 19.3H18" stroke="#CED0D6" stroke-width="1.3"/><circle cx="15.7" cy="3.8" r="4.3" fill="#2B2D30"/><circle cx="15.7" cy="3.8" r="3.5" fill="#5FB865"/></svg>
<svg style="left:1330px;top:210px" width="21" height="21" viewBox="0 0 21 21"><path d="M7 6V3C7 1.9 7.6 1.2 8.7 1.2H17.3C18.4 1.2 19 1.9 19 3V9C19 10.1 18.4 10.8 17.3 10.8H13.5" stroke="#CED0D6" stroke-width="1.3" fill="none" stroke-linejoin="round"/><path d="M3 6H11.3C12.4 6 13 6.7 13 7.8V11" stroke="#CED0D6" stroke-width="1.3" fill="none"/><path d="M3 6C1.9 6 1.3 6.7 1.3 7.8V13.5C1.3 14.6 1.9 15.3 3 15.3H3.5V19L7.5 15.3H9.5" stroke="#CED0D6" stroke-width="1.3" fill="none" stroke-linejoin="round"/><path d="M15.5 11.5L16.7 14.8L20 16L16.7 17.2L15.5 20.5L14.3 17.2L11 16L14.3 14.8Z" fill="#CED0D6"/></svg>
<!-- PROBLEMS -->
<div id="probs" class="a"></div>
<div class="a" style="left:41px;top:458px;width:1279px;height:1px;background:#1E1F22"></div>
<div class="t" style="left:53px;top:471px;-webkit-text-stroke:0.45px #DFE1E5;letter-spacing:-0.16px">Problems</div>
<div class="t" style="left:141px;top:471px;letter-spacing:-0.5px">File</div>
<div class="t" style="left:171px;top:471px;color:#6F737A">9</div>
<div class="t" style="left:207px;top:471px">Project Errors</div>
<div class="a" style="left:127px;top:497px;width:66px;height:3px;border-radius:2px;background:#3574F0"></div>
<div class="a" style="left:41px;top:499px;width:1278px;height:1px;background:#1E1F22"></div>
<svg style="left:1270px;top:472px" width="4" height="14" viewBox="0 0 4 14"><circle cx="2" cy="2" r="1.3" fill="#CED0D6"/><circle cx="2" cy="7" r="1.3" fill="#CED0D6"/><circle cx="2" cy="12" r="1.3" fill="#CED0D6"/></svg>
<div class="a" style="left:1292px;top:478px;width:12px;height:1.5px;background:#CED0D6"></div>
<svg style="left:52px;top:511px" width="18" height="17" viewBox="0 0 18 17"><path d="M1 6.5C2.8 3.3 5.5 1.6 8 1.6S13.2 3.3 15 6.5C13.2 9.7 10.5 11.4 8 11.4S2.8 9.7 1 6.5Z" stroke="#CED0D6" stroke-width="1.3" fill="none"/><circle cx="8" cy="6.5" r="2.4" stroke="#CED0D6" stroke-width="1.3" fill="none"/><path d="M17 12.5V16H13.5Z" fill="#CED0D6"/></svg>
<svg style="left:54px;top:536px" width="12" height="16" viewBox="0 0 12 16"><path d="M6 0.8C9 0.8 11 2.8 11 5.5C11 7.5 9.8 8.6 8.8 9.6V10.5H3.2V9.6C2.2 8.6 1 7.5 1 5.5C1 2.8 3 0.8 6 0.8Z" fill="#5A5D63"/><path d="M3.5 12.5H8.5M3.5 14.7H8.5" stroke="#5A5D63" stroke-width="1.2"/></svg>
<svg style="left:53px;top:563px" width="14" height="14" viewBox="0 0 14 14"><rect x="1" y="1" width="12" height="12" rx="1.5" stroke="#CED0D6" stroke-width="1.2" fill="none"/><path d="M4.5 1V13" stroke="#CED0D6" stroke-width="1.2"/><path d="M6.8 4H11M6.8 7H11M6.8 10H11" stroke="#CED0D6" stroke-width="1.3"/></svg>
<div class="a" style="left:92px;top:504px;width:1215px;height:24px;border-radius:4px;background:#2E436E"></div>
<svg style="left:95px;top:509px" width="15" height="15" viewBox="0 0 15 15"><circle cx="7.5" cy="7.5" r="6.5" stroke="#5A8DF0" stroke-width="1" fill="#233354"/><path d="M9.5 5.5C9.1 4.9 8.4 4.5 7.6 4.5C6.1 4.5 5.1 5.8 5.1 7.5S6.1 10.5 7.6 10.5C8.4 10.5 9.1 10.1 9.5 9.5" stroke="#5A8DF0" stroke-width="1" fill="none"/></svg>
<div class="t" style="left:113px;top:508px">MainActivity.java</div>
<div class="t" style="left:225px;top:508px;letter-spacing:0.066px">C:\Users\HP\Desktop\creative\BaratGharBookingOnline\app\src\main\java\barat\in\baratgharbookingonline</div>
<div class="t" style="left:901px;top:508px">9 problems</div>
<svg style="left:115px;top:533.5px" width="13" height="12" viewBox="0 0 13 12"><path d="M6.5 0.3C7 0.3 7.4 0.6 7.7 1.1L12.2 9.4C12.8 10.5 12.2 11.5 11 11.5H2C0.8 11.5 0.2 10.5 0.8 9.4L5.3 1.1C5.6 0.6 6 0.3 6.5 0.3Z" fill="#DDB454"/><path d="M6.5 3.3V7.2" stroke="#2B2D30" stroke-width="1.9"/><rect x="5.55" y="8.4" width="1.9" height="1.8" fill="#2B2D30"/></svg>
<div class="t" style="left:132px;top:532px;letter-spacing:0.03px">Anonymous new DialogInterface.OnClickListener() can be replaced with lambda</div>
<div class="t" style="left:634px;top:532px;color:#6F737A;letter-spacing:-0.3px">:36</div>
<svg style="left:115px;top:557.5px" width="13" height="12" viewBox="0 0 13 12"><path d="M6.5 0.3C7 0.3 7.4 0.6 7.7 1.1L12.2 9.4C12.8 10.5 12.2 11.5 11 11.5H2C0.8 11.5 0.2 10.5 0.8 9.4L5.3 1.1C5.6 0.6 6 0.3 6.5 0.3Z" fill="#DDB454"/><path d="M6.5 3.3V7.2" stroke="#2B2D30" stroke-width="1.9"/><rect x="5.55" y="8.4" width="1.9" height="1.8" fill="#2B2D30"/></svg>
<div class="t" style="left:132px;top:556px;letter-spacing:0.1px">Casting 'this.findViewById(...)' to 'SwipeRefreshLayout' is redundant</div>
<div class="t" style="left:562px;top:556px;color:#6F737A;letter-spacing:-0.3px">:59</div>
<svg style="left:115px;top:581.5px" width="13" height="12" viewBox="0 0 13 12"><path d="M6.5 0.3C7 0.3 7.4 0.6 7.7 1.1L12.2 9.4C12.8 10.5 12.2 11.5 11 11.5H2C0.8 11.5 0.2 10.5 0.8 9.4L5.3 1.1C5.6 0.6 6 0.3 6.5 0.3Z" fill="#DDB454"/><path d="M6.5 3.3V7.2" stroke="#2B2D30" stroke-width="1.9"/><rect x="5.55" y="8.4" width="1.9" height="1.8" fill="#2B2D30"/></svg>
<div class="t" style="left:132px;top:580px;letter-spacing:0.045px">Anonymous new SwipeRefreshLayout.OnRefreshListener() can be replaced with lambda</div>
<div class="t" style="left:689px;top:580px;color:#6F737A;letter-spacing:-0.3px">:62</div>
<svg style="left:115px;top:605.5px" width="13" height="12" viewBox="0 0 13 12"><path d="M6.5 0.3C7 0.3 7.4 0.6 7.7 1.1L12.2 9.4C12.8 10.5 12.2 11.5 11 11.5H2C0.8 11.5 0.2 10.5 0.8 9.4L5.3 1.1C5.6 0.6 6 0.3 6.5 0.3Z" fill="#DDB454"/><path d="M6.5 3.3V7.2" stroke="#2B2D30" stroke-width="1.9"/><rect x="5.55" y="8.4" width="1.9" height="1.8" fill="#2B2D30"/></svg>
<div class="t" style="left:132px;top:604px;letter-spacing:0.1px">Overrides deprecated method in 'android.webkit.WebViewClient' as of API 24 (&quot;Nougat&quot;; Android 7.0)</div>
<div class="t" style="left:771px;top:604px;color:#6F737A;letter-spacing:-0.3px">:75</div>
<svg style="left:115px;top:629.5px" width="13" height="12" viewBox="0 0 13 12"><path d="M6.5 0.3C7 0.3 7.4 0.6 7.7 1.1L12.2 9.4C12.8 10.5 12.2 11.5 11 11.5H2C0.8 11.5 0.2 10.5 0.8 9.4L5.3 1.1C5.6 0.6 6 0.3 6.5 0.3Z" fill="#DDB454"/><path d="M6.5 3.3V7.2" stroke="#2B2D30" stroke-width="1.9"/><rect x="5.55" y="8.4" width="1.9" height="1.8" fill="#2B2D30"/></svg>
<div class="t" style="left:132px;top:628px;letter-spacing:0.13px">Overrides deprecated method in 'androidx.activity.ComponentActivity'</div>
<div class="t" style="left:575px;top:628px;color:#6F737A;letter-spacing:-0.3px">:88</div>
<svg style="left:115px;top:653.5px" width="13" height="12" viewBox="0 0 13 12"><path d="M6.5 0.3C7 0.3 7.4 0.6 7.7 1.1L12.2 9.4C12.8 10.5 12.2 11.5 11 11.5H2C0.8 11.5 0.2 10.5 0.8 9.4L5.3 1.1C5.6 0.6 6 0.3 6.5 0.3Z" fill="#DDB454"/><path d="M6.5 3.3V7.2" stroke="#2B2D30" stroke-width="1.9"/><rect x="5.55" y="8.4" width="1.9" height="1.8" fill="#2B2D30"/></svg>
<div class="t" style="left:132px;top:652px;letter-spacing:0.03px">Anonymous new DialogInterface.OnClickListener() can be replaced with lambda</div>
<div class="t" style="left:634px;top:652px;color:#6F737A;letter-spacing:-0.3px">:96</div>
<svg style="left:115px;top:677.5px" width="13" height="12" viewBox="0 0 13 12"><path d="M6.5 0.3C7 0.3 7.4 0.6 7.7 1.1L12.2 9.4C12.8 10.5 12.2 11.5 11 11.5H2C0.8 11.5 0.2 10.5 0.8 9.4L5.3 1.1C5.6 0.6 6 0.3 6.5 0.3Z" fill="#DDB454"/><path d="M6.5 3.3V7.2" stroke="#2B2D30" stroke-width="1.9"/><rect x="5.55" y="8.4" width="1.9" height="1.8" fill="#2B2D30"/></svg>
<div class="t" style="left:132px;top:676px;letter-spacing:0.18px">Casting '((ConnectivityManager)context.getSystemService(...)).getActiveNetworkInfo()' to 'NetworkInfo' is redundant</div>
<div class="t" style="left:873px;top:676px;color:#6F737A;letter-spacing:-0.3px">:115</div>
<div class="a" style="left:1310px;top:501px;width:8px;height:142px;border-radius:1px;background:#505256"></div>
<!-- STATUS -->
<div id="status" class="a"></div>
<svg style="left:14px;top:709px" width="8" height="8" viewBox="0 0 8 8"><rect x="0.6" y="0.6" width="6.8" height="6.8" rx="1.5" stroke="#548AF7" stroke-width="1.2" fill="none"/></svg>
<div class="t" style="left:26px;top:705px;color:#A8ADBD;letter-spacing:-0.2px">BaratGharBookingOnline</div>
<svg style="left:187px;top:708px" width="6" height="9" viewBox="0 0 6 9"><path d="M0.8 0.6L4.7 4.5L0.8 8.4" stroke="#A8ADBD" stroke-width="1.2" fill="none"/></svg>
<svg style="left:202px;top:709px" width="8" height="8" viewBox="0 0 8 8"><rect x="0.6" y="0.6" width="6.8" height="6.8" rx="1.5" stroke="#548AF7" stroke-width="1.2" fill="none"/></svg>
<div class="t" style="left:214px;top:705px;color:#A8ADBD">app</div>
<svg style="left:247px;top:708px" width="6" height="9" viewBox="0 0 6 9"><path d="M0.8 0.6L4.7 4.5L0.8 8.4" stroke="#A8ADBD" stroke-width="1.2" fill="none"/></svg>
<div class="t" style="left:261px;top:705px;color:#A8ADBD">src</div>
<svg style="left:290px;top:708px" width="6" height="9" viewBox="0 0 6 9"><path d="M0.8 0.6L4.7 4.5L0.8 8.4" stroke="#A8ADBD" stroke-width="1.2" fill="none"/></svg>
<svg style="left:304px;top:709px" width="8" height="8" viewBox="0 0 8 8"><rect x="0.6" y="0.6" width="6.8" height="6.8" rx="1.5" stroke="#548AF7" stroke-width="1.2" fill="none"/></svg>
<div class="t" style="left:316px;top:705px;color:#A8ADBD">main</div>
<svg style="left:355px;top:708px" width="6" height="9" viewBox="0 0 6 9"><path d="M0.8 0.6L4.7 4.5L0.8 8.4" stroke="#A8ADBD" stroke-width="1.2" fill="none"/></svg>
<div class="t" style="left:369px;top:705px;color:#A8ADBD">java</div>
<svg style="left:402px;top:708px" width="6" height="9" viewBox="0 0 6 9"><path d="M0.8 0.6L4.7 4.5L0.8 8.4" stroke="#A8ADBD" stroke-width="1.2" fill="none"/></svg>
<div class="t" style="left:417px;top:705px;color:#A8ADBD">barat</div>
<svg style="left:457px;top:708px" width="6" height="9" viewBox="0 0 6 9"><path d="M0.8 0.6L4.7 4.5L0.8 8.4" stroke="#A8ADBD" stroke-width="1.2" fill="none"/></svg>
<div class="t" style="left:473px;top:705px;color:#A8ADBD">in</div>
<svg style="left:493px;top:708px" width="6" height="9" viewBox="0 0 6 9"><path d="M0.8 0.6L4.7 4.5L0.8 8.4" stroke="#A8ADBD" stroke-width="1.2" fill="none"/></svg>
<div class="t" style="left:508px;top:705px;color:#A8ADBD">baratgharbookingonline</div>
<svg style="left:665px;top:708px" width="6" height="9" viewBox="0 0 6 9"><path d="M0.8 0.6L4.7 4.5L0.8 8.4" stroke="#A8ADBD" stroke-width="1.2" fill="none"/></svg>
<svg style="left:680px;top:704px" width="16" height="16" viewBox="0 0 16 16"><circle cx="8" cy="8" r="6.8" stroke="#548AF7" stroke-width="1.2" fill="none"/><path d="M10.2 5.6C9.7 4.9 8.9 4.5 8.1 4.5C6.3 4.5 5.1 6 5.1 8S6.3 11.5 8.1 11.5C8.9 11.5 9.7 11.1 10.2 10.4" stroke="#548AF7" stroke-width="1.2" fill="none"/></svg>
<div class="t" style="left:700px;top:705px;color:#A8ADBD">MainActivity.java</div>
<div class="t" style="left:1033px;top:705px;color:#A8ADBD;font-size:13.5px">19:29</div>
<div class="t" style="left:1083px;top:705px;color:#A8ADBD">LF</div>
<div class="a" style="left:1106px;top:699px;width:56px;height:29px;background:#393B40"></div>
<div class="t" style="left:1114px;top:705px;color:#DFE1E5">UTF-8</div>
<svg style="left:1171px;top:705px" width="16" height="14" viewBox="0 0 16 14"><path d="M1 5H8M1 8.5H9.5M1 12H7" stroke="#CED0D6" stroke-width="1.4"/><circle cx="12" cy="4" r="3.2" stroke="#CED0D6" stroke-width="1.2" fill="none"/><path d="M10 6L14 2" stroke="#CED0D6" stroke-width="1.1"/></svg>
<svg style="left:1204px;top:705px" width="16" height="17" viewBox="0 0 16 17"><path d="M6.5 15.3H2.5C1.7 15.3 1.2 14.8 1.2 14V4.5L4.5 1.2H8.5C9.3 1.2 9.8 1.7 9.8 2.5V7.5" stroke="#CED0D6" stroke-width="1.2" fill="none" stroke-linejoin="round"/><path d="M1.2 4.5H4.5V1.2" stroke="#CED0D6" stroke-width="1.1" fill="none"/><circle cx="11.5" cy="12.3" r="2.6" stroke="#CED0D6" stroke-width="1.3" fill="none"/><path d="M11.5 8.2V9.5M11.5 15.1V16.4M7.4 12.3H8.7M14.3 12.3H15.6M8.6 9.4L9.5 10.3M13.5 14.3L14.4 15.2M8.6 15.2L9.5 14.3M13.5 10.3L14.4 9.4" stroke="#CED0D6" stroke-width="1.2"/></svg>
<div class="t" style="left:1222px;top:705px;color:#A8ADBD;letter-spacing:-0.2px">4 spaces</div>
<svg style="left:1296px;top:705px" width="15" height="14" viewBox="0 0 15 14"><rect x="1" y="6.5" width="9" height="6.5" rx="1" stroke="#CED0D6" stroke-width="1.2" fill="none"/><path d="M7.5 6.5V4C7.5 2.3 8.8 1 10.5 1S13.5 2.3 13.5 4V5" stroke="#CED0D6" stroke-width="1.2" fill="none"/><circle cx="5.5" cy="9.8" r="0.9" fill="#CED0D6"/></svg>
<svg style="left:1326px;top:705px" width="16" height="16" viewBox="0 0 16 16"><circle cx="8" cy="8" r="7" stroke="#CED0D6" stroke-width="1.3" fill="none"/><path d="M8 4V9" stroke="#CED0D6" stroke-width="1.6"/><circle cx="8" cy="11.6" r="1" fill="#CED0D6"/></svg><!-- TASKBAR -->
<div id="task" class="a"></div>
<svg style="left:16px;top:740px" width="16" height="16" viewBox="0 0 16 16"><path d="M0 2.2L6.5 1.3V7.5H0Z M7.3 1.2L16 0V7.5H7.3Z M0 8.3H6.5V14.7L0 13.8Z M7.3 8.3H16V16L7.3 14.8Z" fill="#FFFFFF"/></svg>
<div class="a" style="left:48px;top:728px;width:344px;height:40px;background:#F0F0F0"></div>
<svg style="left:60px;top:740px" width="17" height="17" viewBox="0 0 17 17"><circle cx="10.5" cy="6.5" r="5.2" stroke="#1B1B1B" stroke-width="1.4" fill="none"/><path d="M6.8 10.2L0.8 16.2" stroke="#1B1B1B" stroke-width="1.5"/></svg>
<div class="t" style="left:88px;top:740px;color:#1F1F1F;font-size:14.5px;letter-spacing:0.05px">Type here to search</div>
<svg style="left:407px;top:739px" width="18" height="18" viewBox="0 0 18 18"><circle cx="9" cy="9" r="7.3" stroke="#FFFFFF" stroke-width="1.9" fill="none"/></svg>
<svg style="left:455px;top:740px" width="18" height="15" viewBox="0 0 18 15"><rect x="1" y="3" width="11" height="9" stroke="#FFFFFF" stroke-width="1.3" fill="none"/><path d="M0 1H13M0 14H13M15.8 0.5V4.5M15.8 6V14.5" stroke="#FFFFFF" stroke-width="1.3"/></svg>
<svg style="left:504px;top:737px" width="23" height="22" viewBox="0 0 23 22"><path d="M2.2 8.5C3.8 3.8 7.8 1 12 1C17.5 1 21.5 5 21.5 11.5V12.8H7.5C7.8 15.8 10.2 17.8 13.3 17.8C15.8 17.8 18 17 20 15.6V19.8C18 21 15.5 21.6 12.8 21.6C6.8 21.6 2.8 17.8 2.8 12.3C2.8 8.5 5 5.5 8.5 4C6 5.2 4 7 2.2 8.5Z M7.6 9.3H16.2C16.2 6.8 14.5 5.2 12 5.2C9.6 5.2 7.9 6.8 7.6 9.3Z" fill="#1E8CE3" fill-rule="evenodd"/></svg>
<svg style="left:552px;top:738px" width="23" height="19" viewBox="0 0 23 19"><path d="M0.5 1.5C0.5 0.9 0.9 0.5 1.5 0.5H8L10 2.5H21.5C22.1 2.5 22.5 2.9 22.5 3.5V17.5C22.5 18.1 22.1 18.5 21.5 18.5H1.5C0.9 18.5 0.5 18.1 0.5 17.5Z" fill="#E8B53E"/><path d="M0.5 5.5H22.5V17.5C22.5 18.1 22.1 18.5 21.5 18.5H1.5C0.9 18.5 0.5 18.1 0.5 17.5Z" fill="#F8D775"/><path d="M6 18.5V12.5C6 11.9 6.4 11.5 7 11.5H16C16.6 11.5 17 11.9 17 12.5V18.5H14.5V14H8.5V18.5Z" fill="#3B8ED8"/></svg>
<div class="a" style="left:544px;top:766px;width:40px;height:2px;background:#76B9ED"></div>
<svg style="left:600px;top:736px" width="26" height="23" viewBox="0 0 26 23"><path d="M13 0.5L25.5 8.5V22.5H0.5V8.5Z" fill="#0F6CC7"/><path d="M0.5 8.5L13 16L25.5 8.5V22.5H0.5Z" fill="#30A8F0"/><path d="M4 8.5L13 2.8L22 8.5L13 14Z" fill="#FFFFFF" opacity="0.92"/><path d="M0.5 22.5L13 13.5L25.5 22.5Z" fill="#4CB8F5"/></svg>
<svg style="left:650px;top:736px" width="24" height="24" viewBox="0 0 24 24"><circle cx="12" cy="12" r="11.5" fill="#DB4437"/><path d="M12 12L2 6.2A11.5 11.5 0 0 0 6.3 22Z" fill="#0F9D58"/><path d="M12 12L6.3 22A11.5 11.5 0 0 0 23.5 12L12 12 Z" fill="#F4B400"/><path d="M12 6.5H22.4A11.5 11.5 0 0 1 23.5 12H17.5Z" fill="#F4B400"/><path d="M12 12L2 6.2L6.3 22Z" fill="#0F9D58"/><circle cx="12" cy="12" r="5.3" fill="#FFFFFF"/><circle cx="12" cy="12" r="4.2" fill="#4285F4"/></svg>
<svg style="left:699px;top:736px" width="24" height="24" viewBox="0 0 24 24"><path d="M8 6V3.5C8 2.2 9 1.2 10.3 1.2H13.7C15 1.2 16 2.2 16 3.5V6" stroke="#3FA9F5" stroke-width="1.8" fill="none"/><rect x="1" y="6" width="22" height="17" rx="2.5" fill="#F5F5F5"/><rect x="7.2" y="10" width="4.3" height="4.3" fill="#F25022"/><rect x="12.5" y="10" width="4.3" height="4.3" fill="#7FBA00"/><rect x="7.2" y="15.3" width="4.3" height="4.3" fill="#00A4EF"/><rect x="12.5" y="15.3" width="4.3" height="4.3" fill="#FFB900"/></svg>
<svg style="left:748px;top:735px" width="24" height="26" viewBox="0 0 24 26"><ellipse cx="12" cy="13" rx="11.2" ry="12.2" fill="#E0202B"/><ellipse cx="12" cy="13" rx="4.6" ry="8.8" fill="#1F333E"/></svg>
<svg style="left:797px;top:736px" width="24" height="24" viewBox="0 0 24 24"><circle cx="12" cy="12" r="11.5" fill="#DB4437"/><path d="M12 12L6.3 22A11.5 11.5 0 0 0 23.5 12L12 12 Z" fill="#F4B400"/><path d="M12 6.5H22.4A11.5 11.5 0 0 1 23.5 12H17.5Z" fill="#F4B400"/><path d="M12 12L2 6.2L6.3 22Z" fill="#0F9D58"/><path d="M2 6.2A11.5 11.5 0 0 0 6.3 22L12 12Z" fill="#0F9D58"/><circle cx="12" cy="12" r="5.3" fill="#FFFFFF"/><circle cx="12" cy="12" r="4.2" fill="#4285F4"/></svg>
<div class="a" style="left:789px;top:766px;width:40px;height:2px;background:#76B9ED"></div>
<div class="a" style="left:834px;top:728px;width:48px;height:40px;background:#4B5661"></div>
<div class="a" style="left:834px;top:766px;width:48px;height:2px;background:#76B9ED"></div>
<svg style="left:846px;top:736px" width="24" height="24" viewBox="0 0 24 24"><path d="M12 0.5L14.2 2L16.8 1.6L18 4L20.5 4.8L20.6 7.5L22.6 9.3L21.7 11.8L22.8 14.3L20.8 16L20.7 18.7L18.2 19.5L17 21.9L14.4 21.5L12.2 23L10 21.5L7.4 21.9L6.2 19.5L3.7 18.7L3.6 16L1.6 14.3L2.5 11.8L1.6 9.3L3.6 7.5L3.7 4.8L6.2 4L7.4 1.6L10 2Z" fill="#FFFFFF"/><path d="M12 4.5V7M8 18.5L12 7.5L16 18.5M9.5 14.5H14.5" stroke="#3D7DE0" stroke-width="2" fill="none"/><circle cx="12" cy="8.5" r="1.8" fill="#3D7DE0"/><path d="M14 13L17 11" stroke="#3DDC84" stroke-width="1.5"/></svg>
<!-- tray -->
<svg style="left:1087px;top:744px" width="13" height="8" viewBox="0 0 13 8"><path d="M0.8 7.2L6.5 1.5L12.2 7.2" stroke="#FFFFFF" stroke-width="1.3" fill="none"/></svg>
<svg style="left:1108px;top:740px" width="19" height="17" viewBox="0 0 19 17"><path d="M1 2.2L16.5 0.8V14L1 13Z" stroke="#FFFFFF" stroke-width="1.2" fill="none"/><path d="M6.2 9.3C6.8 6.5 9.5 5.2 11.8 6.2M11.8 4.6V6.4L10 6.6" stroke="#FFFFFF" stroke-width="1.1" fill="none"/><circle cx="13.6" cy="12.7" r="3.2" fill="#F39C1F"/></svg>
<svg style="left:1132px;top:741px" width="18" height="13" viewBox="0 0 18 13"><path d="M3 1V4M6 1V4M1.5 4H7.5V6C7.5 7.7 6.2 9 4.5 9S1.5 7.7 1.5 6Z M4.5 9V12" stroke="#FFFFFF" stroke-width="1.1" fill="none"/><rect x="7" y="3.5" width="9.5" height="8" stroke="#FFFFFF" stroke-width="1.1" fill="none"/><path d="M17 6V9" stroke="#FFFFFF" stroke-width="1.4"/><rect x="9" y="5.5" width="3" height="4" fill="#FFFFFF"/></svg>
<svg style="left:1159px;top:741px" width="15" height="15" viewBox="0 0 15 15"><path d="M1 14C1 7 6.5 1 14 1M4 14C4 9 8 4 14 4M7 14C7 11 9.5 7.2 14 7.2" stroke="#FFFFFF" stroke-width="1.2" fill="none"/><circle cx="12" cy="12" r="1.5" fill="#FFFFFF"/></svg>
<svg style="left:1181px;top:741px" width="17" height="14" viewBox="0 0 17 14"><path d="M1 4.5H3.8L7.5 1V13L3.8 9.5H1Z" stroke="#FFFFFF" stroke-width="1.1" fill="none" stroke-linejoin="round"/><path d="M10 4.5C10.8 5.3 10.8 8.7 10 9.5M12.5 2.8C14 4.5 14 9.5 12.5 11.2" stroke="#FFFFFF" stroke-width="1.1" fill="none"/><path d="M15 1.2C17 4 17 10 15 12.8" stroke="#8A94A5" stroke-width="1" fill="none"/></svg>
<div class="t" style="left:1207px;top:741px;color:#FFFFFF;font-size:11.5px;line-height:13px">ENG</div>
<div class="t" style="left:1258px;top:733px;color:#FFFFFF;font-size:11.5px;line-height:13px">00:04</div>
<div class="t" style="left:1243px;top:750px;color:#FFFFFF;font-size:11.5px;line-height:13px;letter-spacing:-0.15px">17-02-2026</div>
<svg style="left:1318px;top:739px" width="19" height="16" viewBox="0 0 19 16"><path d="M0.5 0.5H17.5V12.5H7L3.5 15.5V12.5H0.5Z" fill="#FFFFFF"/><path d="M3.5 4H14.5M3.5 6.5H14.5M3.5 9H11" stroke="#1A2A48" stroke-width="1.1"/></svg>
<svg style="left:1326px;top:746px" width="18" height="18" viewBox="0 0 18 18"><circle cx="9" cy="9" r="7.8" fill="#2A2C30" stroke="#8D9197" stroke-width="1"/></svg>
<div class="t" style="left:1326px;top:749px;width:18px;text-align:center;color:#FFFFFF;font-size:11.5px;line-height:12px">3</div>
<div class="a" style="left:1355px;top:728px;width:1px;height:40px;background:#6B7587"></div>

</body></html>
